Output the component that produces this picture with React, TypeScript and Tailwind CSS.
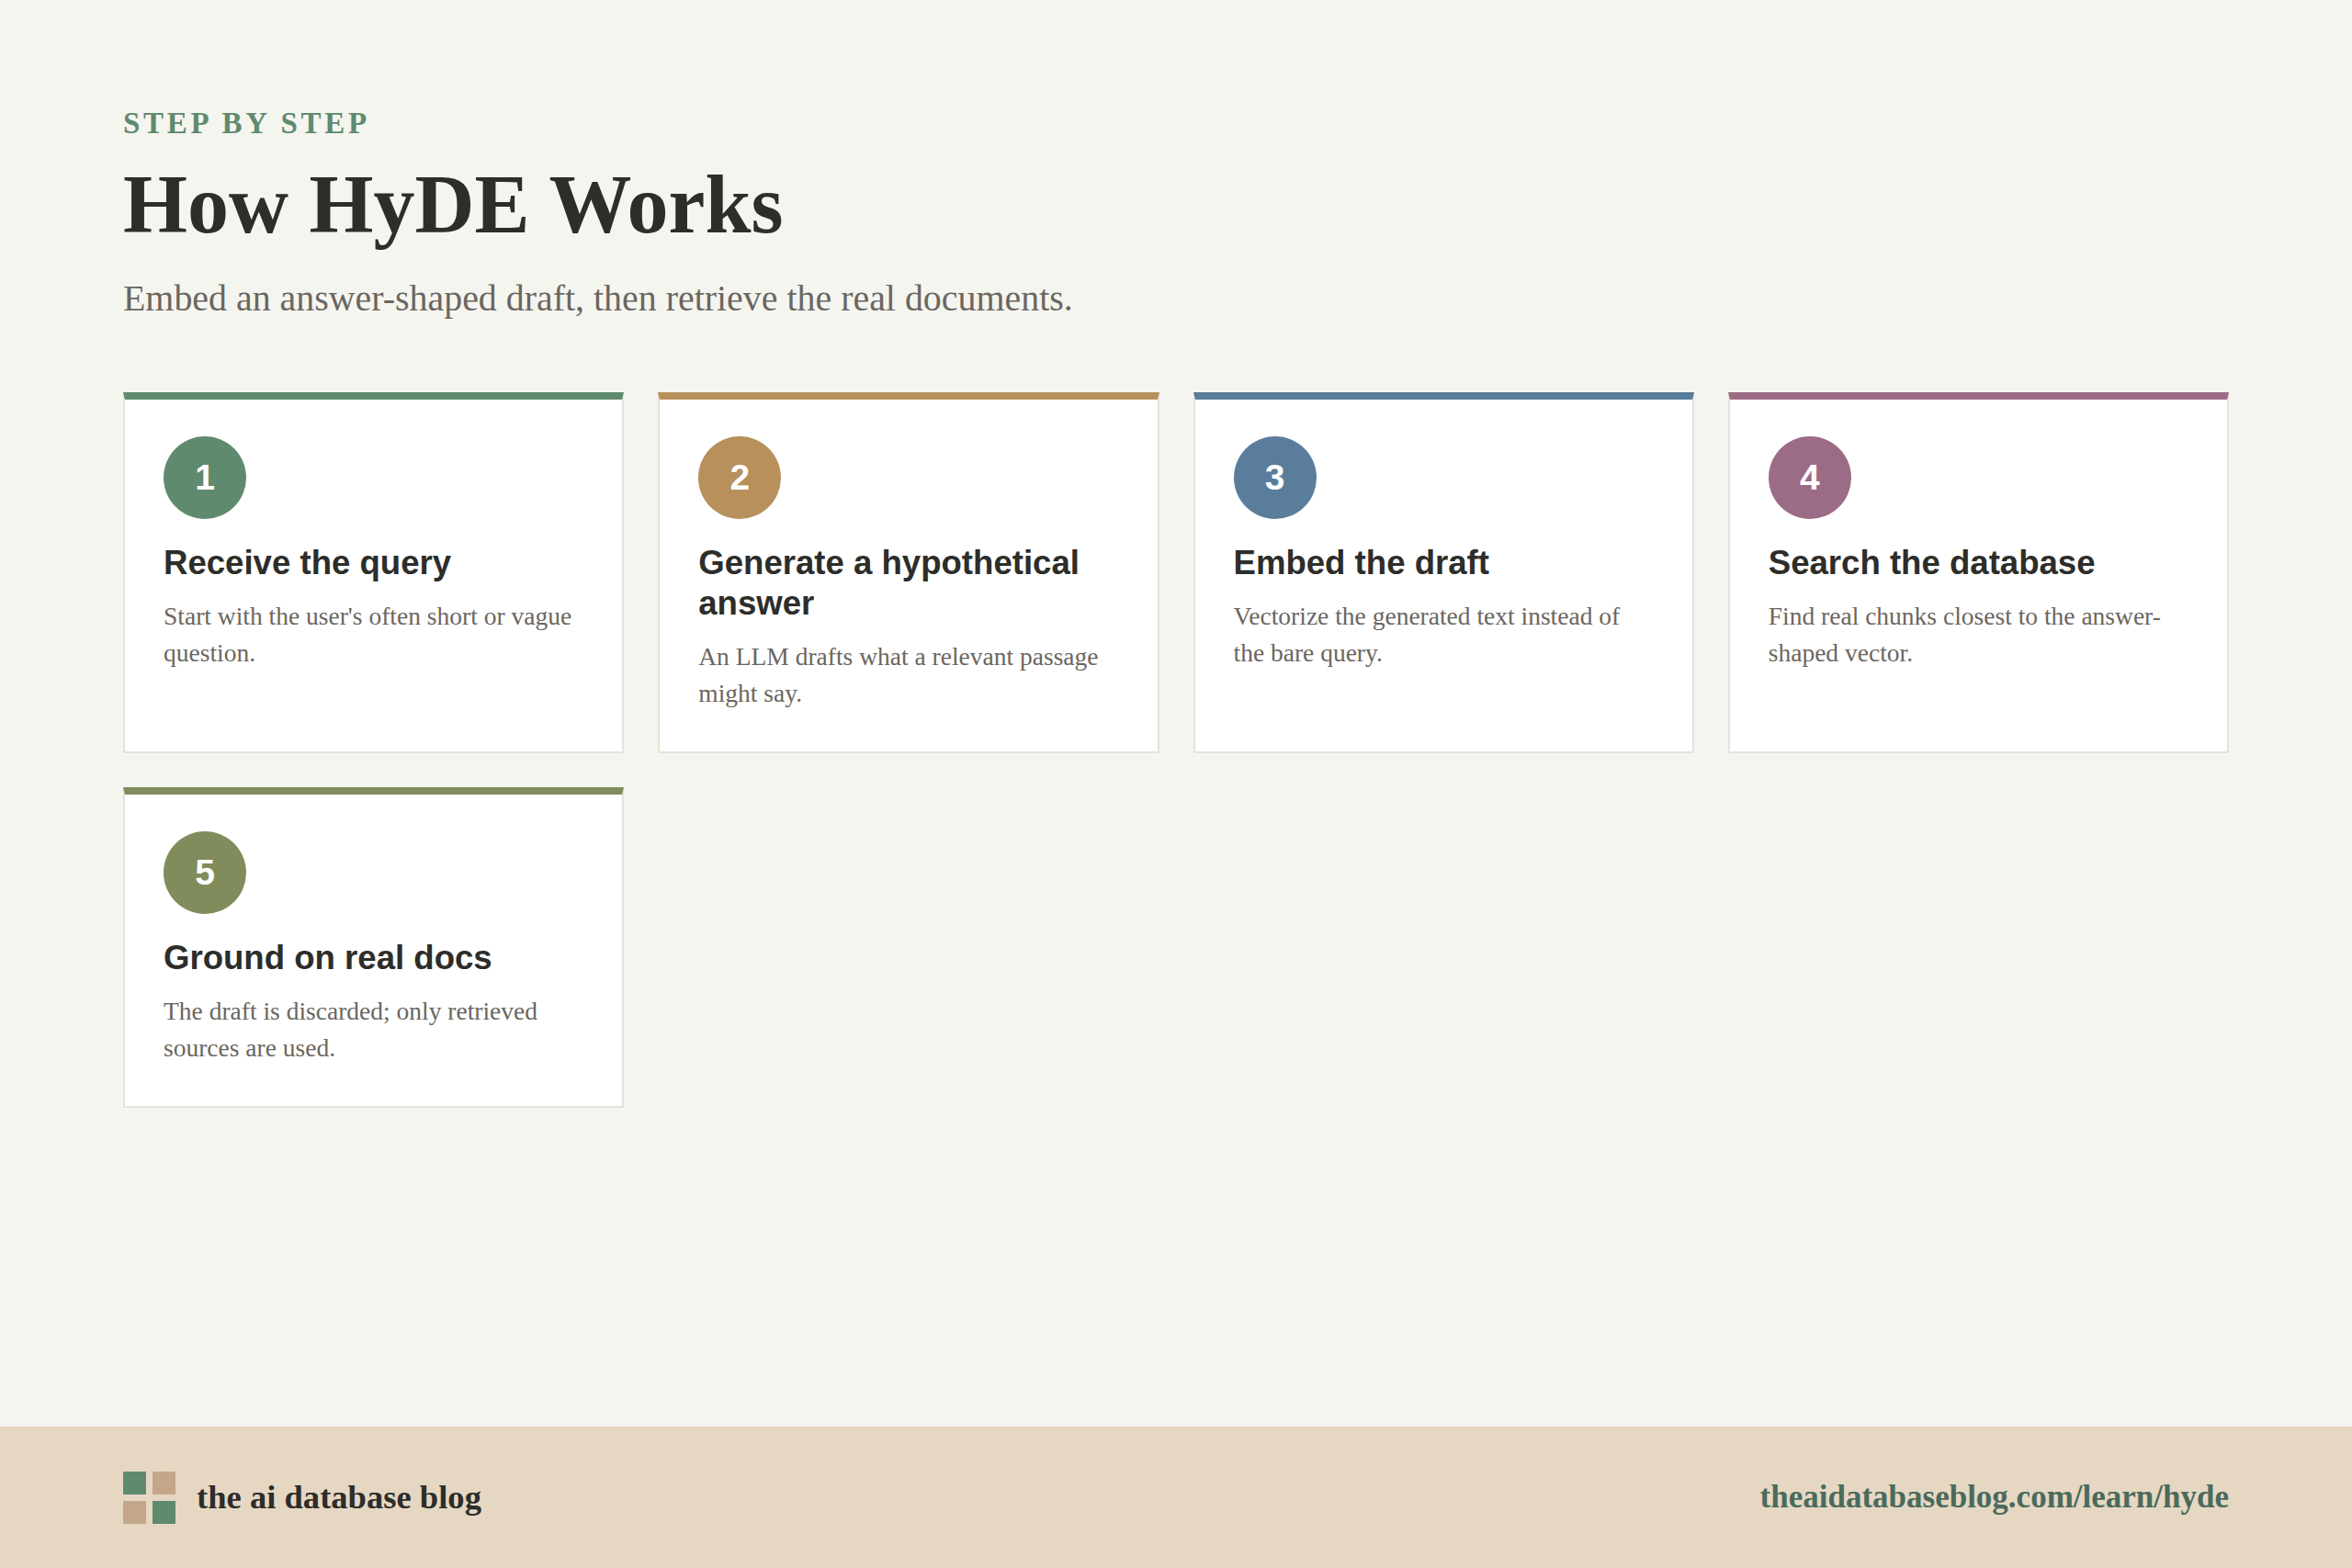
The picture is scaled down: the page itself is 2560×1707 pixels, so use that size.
const steps = [
  {
    n: 1,
    title: 'Receive the query',
    text: "Start with the user's often short or vague question.",
    bar: 'border-t-[#5f8a6e]',
    dot: 'bg-[#5f8a6e]',
  },
  {
    n: 2,
    title: 'Generate a hypothetical answer',
    text: 'An LLM drafts what a relevant passage might say.',
    bar: 'border-t-[#b8905c]',
    dot: 'bg-[#b8905c]',
  },
  {
    n: 3,
    title: 'Embed the draft',
    text: 'Vectorize the generated text instead of the bare query.',
    bar: 'border-t-[#5a7d9c]',
    dot: 'bg-[#5a7d9c]',
  },
  {
    n: 4,
    title: 'Search the database',
    text: 'Find real chunks closest to the answer-shaped vector.',
    bar: 'border-t-[#9c6b85]',
    dot: 'bg-[#9c6b85]',
  },
  {
    n: 5,
    title: 'Ground on real docs',
    text: 'The draft is discarded; only retrieved sources are used.',
    bar: 'border-t-[#808c5c]',
    dot: 'bg-[#808c5c]',
  },
];

const App = () => {
  return (
    <div className="min-h-[1707px] flex flex-col bg-[#f5f5f0] font-['Liberation_Serif',serif]">
      <main className="flex-1 px-[134px] pt-[114px]">
        <div className="text-[33px] leading-[40px] font-bold tracking-[3.7px] text-[#5f8a6e]">
          STEP BY STEP
        </div>
        <h1 className="mt-[19px] text-[90px] leading-[100px] font-bold text-[#2d2d2a]">
          How HyDE Works
        </h1>
        <p className="mt-[28px] text-[39.9px] leading-[48px] text-[#6b6660]">
          Embed an answer-shaped draft, then retrieve the real documents.
        </p>

        <section className="mt-[78px] grid grid-cols-4 gap-[37px]">
          {steps.map((s) => (
            <article
              key={s.n}
              className={`bg-white border-2 border-[#e5e2d9] border-t-8 ${s.bar} px-[42px] pt-[40px] pb-[43px]`}
            >
              <div
                className={`w-[90px] h-[90px] rounded-full flex items-center justify-center text-white text-[39px] font-bold font-['Liberation_Sans',sans-serif] ${s.dot}`}
              >
                {s.n}
              </div>
              <h3 className="mt-[26px] text-[36.6px] leading-[44px] font-bold text-[#2d2d2a] font-['Liberation_Sans',sans-serif]">
                {s.title}
              </h3>
              <p className="mt-[16px] text-[27.5px] leading-[40px] text-[#6b6660]">
                {s.text}
              </p>
            </article>
          ))}
        </section>
      </main>

      <footer className="h-[154px] bg-[#e6d7c3] px-[134px] flex items-center justify-between">
        <div className="flex items-center gap-[23px]">
          <div className="grid grid-cols-2 gap-[7px]">
            <div className="w-[25px] h-[25px] bg-[#5f8a6e]"></div>
            <div className="w-[25px] h-[25px] bg-[#c4a68a]"></div>
            <div className="w-[25px] h-[25px] bg-[#c4a68a]"></div>
            <div className="w-[25px] h-[25px] bg-[#5f8a6e]"></div>
          </div>
          <span className="text-[36.6px] font-bold text-[#2d2d2a]">the ai database blog</span>
        </div>
        <span className="text-[35px] font-bold text-[#4a6b5c]">theaidatabaseblog.com/learn/hyde</span>
      </footer>
    </div>
  );
};

export default App;
